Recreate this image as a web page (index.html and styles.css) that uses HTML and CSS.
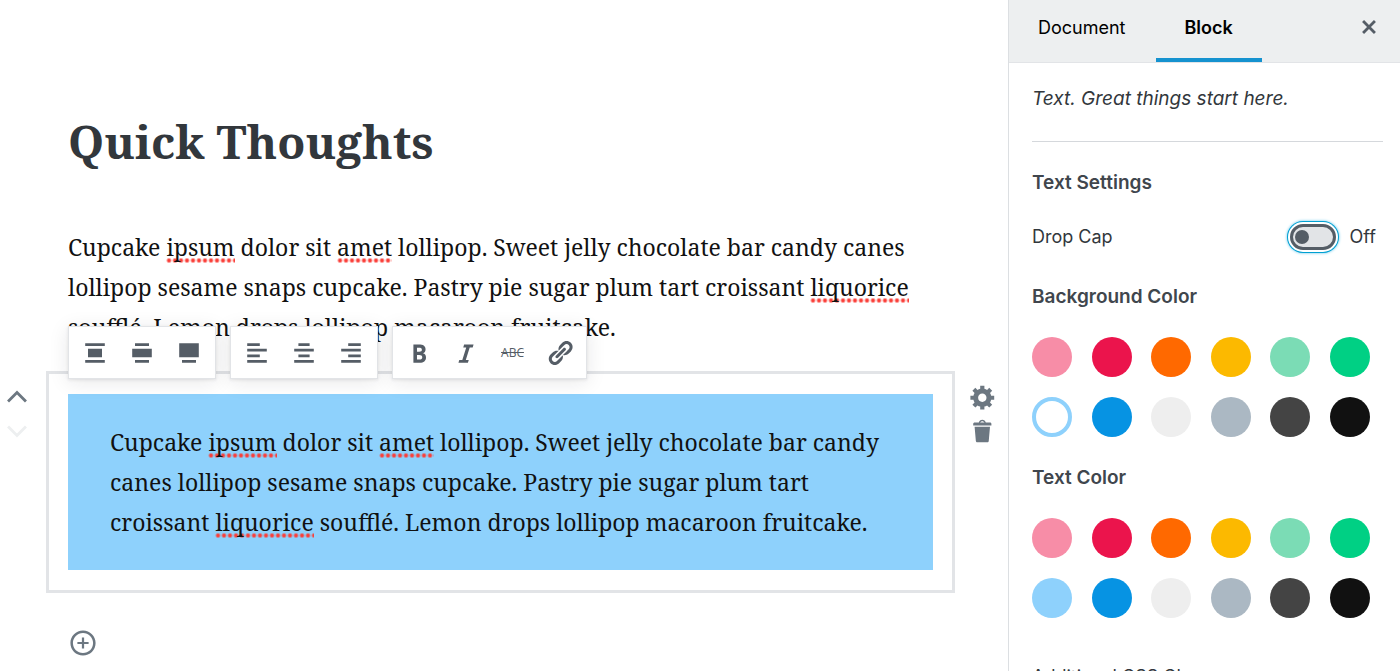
FILE: index.html
```html
<!DOCTYPE html>
<html lang="en">
  <head>
    <meta charset="utf-8">
    <title>Quick Thoughts</title>
    <link rel="stylesheet" href="styles.css">
  </head>
  <body>
    <main class="editor">
      <h1 class="post-title">Quick Thoughts</h1>
      <p class="paragraph">Cupcake <span class="misspelled">ipsum</span> dolor sit <span class="misspelled">amet</span> lollipop. Sweet jelly chocolate bar candy canes<br>
        lollipop sesame snaps cupcake. Pastry pie sugar plum tart croissant <span class="misspelled">liquorice</span><br>
        soufflé. Lemon drops lollipop macaroon fruitcake.</p>

      <div class="block-row">
        <div class="block-side">
          <button type="button" class="icon-button" aria-label="Move up">
            <svg viewBox="0 0 20 20"><path d="M3.6 13.2 10 6.8l6.4 6.4" fill="none" stroke="currentColor" stroke-width="2"/></svg>
          </button>
          <button type="button" class="icon-button" aria-label="Move down" disabled>
            <svg viewBox="0 0 20 20"><path d="M3.6 6.8 10 13.2l6.4-6.4" fill="none" stroke="currentColor" stroke-width="2"/></svg>
          </button>
        </div>

        <div class="block">
          <div class="toolbar">
            <div class="toolbar-group">
              <button type="button" aria-label="Align center">
                <svg viewBox="0 0 20 20"><path d="M3 5h14V3H3v2zm12 8V7H5v6h10zM3 17h14v-2H3v2z"/></svg>
              </button>
              <button type="button" aria-label="Wide width">
                <svg viewBox="0 0 20 20"><path d="M5 5h10V3H5v2zm12 8V7H3v6h14zM5 17h10v-2H5v2z"/></svg>
              </button>
              <button type="button" aria-label="Full width">
                <svg viewBox="0 0 20 20"><path d="M17 13V3H3v10h14zM5 17h10v-2H5v2z"/></svg>
              </button>
            </div>
            <div class="toolbar-group">
              <button type="button" aria-label="Align text left">
                <svg viewBox="0 0 20 20"><path d="M12 5V3H3v2h9zm5 4V7H3v2h14zm-5 4v-2H3v2h9zm5 4v-2H3v2h14z"/></svg>
              </button>
              <button type="button" aria-label="Align text center">
                <svg viewBox="0 0 20 20"><path d="M14 5V3H6v2h8zm3 4V7H3v2h14zm-3 4v-2H6v2h8zm3 4v-2H3v2h14z"/></svg>
              </button>
              <button type="button" aria-label="Align text right">
                <svg viewBox="0 0 20 20"><path d="M17 5V3H8v2h9zm0 4V7H3v2h14zm0 4v-2H8v2h9zm0 4v-2H3v2h14z"/></svg>
              </button>
            </div>
            <div class="toolbar-group">
              <button type="button" aria-label="Bold">
                <svg viewBox="0 0 20 20"><path d="M6 4v13h4.54c1.37 0 2.46-.33 3.26-1 .8-.66 1.2-1.58 1.2-2.77 0-.84-.17-1.51-.51-2.01s-.9-.85-1.67-1.03v-.09c.57-.1 1.02-.4 1.36-.9s.51-1.13.51-1.91c0-1.14-.39-1.98-1.17-2.5C12.75 4.26 11.5 4 9.78 4H6zm2.57 5.15V6.26h1.36c.73 0 1.27.11 1.61.32.34.22.51.58.51 1.07 0 .54-.16.92-.47 1.15s-.82.35-1.51.35h-1.5zm0 2.19h1.6c1.44 0 2.16.53 2.16 1.61 0 .6-.17 1.05-.51 1.34s-.86.43-1.57.43H8.57v-3.38z"/></svg>
              </button>
              <button type="button" aria-label="Italic">
                <svg viewBox="0 0 20 20"><path d="M14.78 6h-2.13l-2.8 9h2.12l-.62 2H4.6l.62-2h2.14l2.8-9H8.03l.62-2h6.75z"/></svg>
              </button>
              <button type="button" class="strike" aria-label="Strikethrough">ABC</button>
              <button type="button" aria-label="Link">
                <svg viewBox="0 0 20 20"><path d="M17.74 2.76c1.68 1.69 1.68 4.41 0 6.1l-1.53 1.52c-1.12 1.12-2.7 1.47-4.14 1.09l2.62-2.61.76-.77.76-.76c.84-.84.84-2.2 0-3.04-.84-.85-2.2-.85-3.04 0l-.77.76-3.38 3.38c-.37-1.44-.02-3.02 1.1-4.14l1.52-1.53c1.69-1.68 4.42-1.68 6.1 0zM8.59 13.43l5.34-5.34c.42-.42.42-1.1 0-1.52-.44-.43-1.13-.39-1.53 0l-5.33 5.34c-.42.42-.42 1.1 0 1.52.44.43 1.13.39 1.52 0zm-.76 2.29l4.14-4.15c.38 1.44.03 3.02-1.09 4.14l-1.52 1.53c-1.69 1.68-4.41 1.68-6.1 0-1.68-1.68-1.68-4.42 0-6.1l1.53-1.52c1.12-1.12 2.7-1.47 4.14-1.1l-4.14 4.15c-.85.84-.85 2.2 0 3.05.84.84 2.2.84 3.04 0z"/></svg>
              </button>
            </div>
          </div>
          <p class="paragraph has-background">Cupcake <span class="misspelled">ipsum</span> dolor sit <span class="misspelled">amet</span> lollipop. Sweet jelly chocolate bar candy<br>
            canes lollipop sesame snaps cupcake. Pastry pie sugar plum tart<br>
            croissant <span class="misspelled">liquorice</span> soufflé. Lemon drops lollipop macaroon fruitcake.</p>
        </div>

        <div class="block-side">
          <button type="button" class="icon-button" aria-label="Settings">
            <svg viewBox="0 0 20 20"><path d="M18 12h-2.18c-.17.7-.44 1.35-.81 1.93l1.54 1.54-2.1 2.1-1.54-1.54c-.58.36-1.23.63-1.91.79V19H8v-2.18c-.68-.16-1.33-.43-1.91-.79l-1.54 1.54-2.12-2.12 1.54-1.54c-.36-.58-.63-1.23-.79-1.91H1V9.03h2.17c.16-.7.44-1.35.8-1.94L2.43 5.55l2.1-2.1 1.54 1.54c.58-.37 1.24-.64 1.93-.81V2h3v2.18c.68.16 1.33.43 1.91.79l1.54-1.54 2.12 2.12-1.54 1.54c.36.59.64 1.24.8 1.94H18V12zm-8.5 1.5c1.66 0 3-1.34 3-3s-1.34-3-3-3-3 1.34-3 3 1.34 3 3 3z"/></svg>
          </button>
          <button type="button" class="icon-button" aria-label="Delete">
            <svg viewBox="0 0 20 20"><path d="M12 4h3c.6 0 1 .4 1 1v1H3V5c0-.6.5-1 1-1h3c.2-1.1 1.3-2 2.5-2s2.3.9 2.5 2zM8 4h3c-.2-.6-.9-1-1.5-1S8.2 3.4 8 4zM4 7h11l-.9 10.1c0 .5-.5.9-1 .9H5.9c-.5 0-.9-.4-1-.9L4 7z"/></svg>
          </button>
        </div>
      </div>

      <button type="button" class="icon-button inserter" aria-label="Add block">
        <svg viewBox="0 0 20 20"><path d="M10 1c-5 0-9 4-9 9s4 9 9 9 9-4 9-9-4-9-9-9zm0 16.2c-4 0-7.2-3.2-7.2-7.2S6 2.8 10 2.8s7.2 3.2 7.2 7.2-3.2 7.2-7.2 7.2zM10.8 6H9.2v3.2H6v1.6h3.2V14h1.6v-3.2H14V9.2h-3.2V6z"/></svg>
      </button>
    </main>

    <aside class="sidebar">
      <div class="tabs">
        <button type="button" class="tab">Document</button>
        <button type="button" class="tab active">Block</button>
        <button type="button" class="icon-button close" aria-label="Close settings">
          <svg viewBox="0 0 20 20"><path d="M14.95 6.46L11.41 10l3.54 3.54-1.41 1.41L10 11.42l-3.53 3.53-1.42-1.42L8.58 10 5.05 6.47l1.42-1.42L10 8.58l3.54-3.53z"/></svg>
        </button>
      </div>

      <div class="panel">
        <p class="description">Text. Great things start here.</p>

        <h2>Text Settings</h2>
        <div class="toggle-row">
          <label for="dropCap">Drop Cap</label>
          <input type="checkbox" id="dropCap" class="toggle">
          <span>Off</span>
        </div>

        <h2>Background Color</h2>
        <div class="swatches">
          <button type="button" class="swatch pink" aria-label="Pale pink"></button>
          <button type="button" class="swatch red" aria-label="Vivid red"></button>
          <button type="button" class="swatch orange" aria-label="Orange"></button>
          <button type="button" class="swatch amber" aria-label="Amber"></button>
          <button type="button" class="swatch mint" aria-label="Light green"></button>
          <button type="button" class="swatch green" aria-label="Green"></button>
          <button type="button" class="swatch sky selected" aria-label="Pale blue"></button>
          <button type="button" class="swatch blue" aria-label="Blue"></button>
          <button type="button" class="swatch light" aria-label="Very light gray"></button>
          <button type="button" class="swatch gray" aria-label="Bluish gray"></button>
          <button type="button" class="swatch dark" aria-label="Dark gray"></button>
          <button type="button" class="swatch black" aria-label="Black"></button>
        </div>

        <h2>Text Color</h2>
        <div class="swatches">
          <button type="button" class="swatch pink" aria-label="Pale pink"></button>
          <button type="button" class="swatch red" aria-label="Vivid red"></button>
          <button type="button" class="swatch orange" aria-label="Orange"></button>
          <button type="button" class="swatch amber" aria-label="Amber"></button>
          <button type="button" class="swatch mint" aria-label="Light green"></button>
          <button type="button" class="swatch green" aria-label="Green"></button>
          <button type="button" class="swatch sky" aria-label="Pale blue"></button>
          <button type="button" class="swatch blue" aria-label="Blue"></button>
          <button type="button" class="swatch light" aria-label="Very light gray"></button>
          <button type="button" class="swatch gray" aria-label="Bluish gray"></button>
          <button type="button" class="swatch dark" aria-label="Dark gray"></button>
          <button type="button" class="swatch black" aria-label="Black"></button>
        </div>

        <label class="css-label" for="cssClass">Additional CSS Class</label>
        <input type="text" id="cssClass" class="css-input">
      </div>
    </aside>
  </body>
</html>
```

FILE: styles.css
```css
* {
  box-sizing: border-box;
}

body {
  display: flex;
  height: 100vh;
  margin: 0;
  overflow: hidden;
  background-color: #fff;
  color: #191e23;
  font-family: Inter, "Liberation Sans", sans-serif;
  font-size: 18px;
}

h1,
h2,
p {
  margin: 0;
}

button {
  padding: 0;
  border: none;
  background: none;
  color: inherit;
  font: inherit;
  cursor: pointer;
}

svg {
  display: block;
  width: 28px;
  height: 28px;
  fill: currentColor;
}

/* Editor */

.editor {
  flex: 1;
  min-width: 0;
  padding-top: 111px;
}

.post-title {
  margin: 0 68px 56px;
  color: #32373c;
  font-family: "Noto Serif", "DejaVu Serif", serif;
  font-size: 46px;
  line-height: 60px;
}

.paragraph {
  color: #111;
  font-family: "Noto Serif", "DejaVu Serif", serif;
  font-size: 23px;
  line-height: 40px;
  white-space: nowrap;
}

.editor > .paragraph {
  margin: 0 68px 24px;
}

/* spell-check dots */
.misspelled {
  background: radial-gradient(circle, #fa3e38 1px, transparent 3px) 0 100% / 6px 5px repeat-x;
}

.block-row {
  display: flex;
}

.block-side {
  display: flex;
  flex: 0 0 46px;
  flex-direction: column;
  align-items: center;
  padding-top: 9px;
}

.block-side:first-child {
  padding-right: 12px;
}

.block-side:last-child {
  flex-basis: 53px;
  padding-left: 3px;
}

.icon-button {
  display: flex;
  align-items: center;
  justify-content: center;
  width: 34px;
  height: 34px;
  color: #6c7781;
}

.icon-button:disabled {
  color: #edeff0;
}

.block {
  position: relative;
  flex: 1;
  min-width: 0;
  padding: 20px 19px;
  border: 3px solid #e2e4e7;
}

.has-background {
  padding: 28px 42px;
  background-color: #8ed1fc;
}

.toolbar {
  position: absolute;
  bottom: 100%;
  left: 19px;
  display: flex;
  gap: 14px;
  margin-bottom: -5px;
}

.toolbar-group {
  display: flex;
  padding: 0 3px 0 2px;
  border: 1px solid #e2e4e7;
  background-color: #fff;
  box-shadow: 0 3px 20px rgba(25, 30, 35, 0.1), 0 1px 3px rgba(25, 30, 35, 0.1);
}

.toolbar-group button {
  display: flex;
  align-items: center;
  justify-content: center;
  width: 47px;
  height: 51px;
  color: #555d66;
}

.toolbar-group .strike {
  font-family: "Open Sans", sans-serif;
  font-size: 12px;
  text-decoration: line-through;
}

.inserter {
  margin: 33px 66px;
}

/* Sidebar */

.sidebar {
  flex: 0 0 392px;
  overflow: hidden;
  border-left: 1px solid #dcdfe2;
  color: #32373c;
}

.tabs {
  display: flex;
  align-items: flex-start;
  gap: 1px;
  height: 63px;
  border-bottom: 1px solid #e2e4e7;
  background-color: #edeff0;
}

.tab {
  height: 62px;
  padding: 0 29px 4px;
  border-bottom: 4px solid transparent;
  color: #000;
}

.tab.active {
  border-bottom-color: #1592cf;
  font-weight: 600;
}

.close {
  margin: 10px 14px 0 auto;
  color: #555d66;
}

.panel {
  padding: 24px 17px 24px 23px;
}

.description {
  padding-bottom: 30px;
  border-bottom: 1px solid #d5d8dc;
  font-size: 19px;
  font-style: italic;
  line-height: 24px;
}

h2 {
  color: #40464d;
  font-size: 19px;
  font-weight: 600;
  line-height: 24px;
}

.description + h2 {
  margin-top: 29px;
}

.toggle-row {
  display: flex;
  align-items: center;
  gap: 14px;
  margin: 29px 7px 35px 0;
  line-height: 26px;
}

.toggle-row label {
  flex: 1;
}

.toggle {
  display: flex;
  align-items: center;
  width: 46px;
  height: 26px;
  margin: 0;
  padding-left: 2px;
  border: 3px solid #555d66;
  border-radius: 13px;
  background-color: #e2e4e7;
  box-shadow: 0 0 0 2px #fff, 0 0 0 3px #00a0d2, 0 0 3px 3px #5bc0e8;
  appearance: none;
}

.toggle::before {
  width: 14px;
  height: 14px;
  border-radius: 50%;
  background-color: #555d66;
  content: "";
}

.swatches {
  display: grid;
  grid-template-columns: repeat(6, 40px);
  justify-content: space-between;
  row-gap: 20px;
  margin: 28px 13px 29px 0;
}

.swatch {
  height: 40px;
  border-radius: 50%;
  background-color: currentColor;
}

.swatch.selected {
  border: 4px solid currentColor;
  background-color: #fff;
}

.pink { color: #f78da7; }
.red { color: #eb144c; }
.orange { color: #ff6900; }
.amber { color: #fcb900; }
.mint { color: #7bdcb5; }
.green { color: #00d084; }
.sky { color: #8ed1fc; }
.blue { color: #0693e3; }
.light { color: #eee; }
.gray { color: #abb8c3; }
.dark { color: #444; }
.black { color: #111; }

.css-label {
  display: block;
  margin-top: 47px;
  line-height: 24px;
}

.css-input {
  width: 100%;
  height: 36px;
  margin-top: 10px;
  border: 1px solid #8d96a0;
  border-radius: 4px;
}
```
